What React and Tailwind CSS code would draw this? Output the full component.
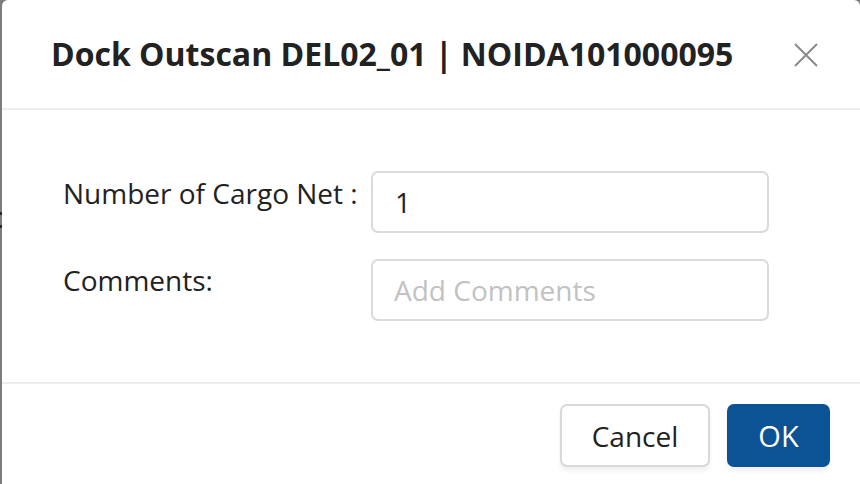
export default function App() {
  return (
    <div className="w-[860px] h-[484px] bg-[#7d7d7d] flex overflow-hidden" style={{ fontFamily: '"Open Sans", sans-serif' }}>
      <div className="w-[2px] shrink-0 flex flex-col">
        <div className="h-[212px]" />
        <div className="h-[3px] bg-[#2a2a2a]" />
        <div className="h-[10px]" />
        <div className="h-[3px] bg-[#2a2a2a]" />
      </div>
      <div className="flex-1 bg-white rounded-tl-[6px] rounded-tr-[6px] flex flex-col">
        <div className="h-[110px] flex items-center justify-between pl-[49px] pr-[42px] border-b-2 border-[#ececec]">
          <h1 className="text-[32px] font-bold text-[#222222] leading-none">Dock Outscan DEL02_01 | NOIDA101000095</h1>
          <svg width="24" height="24" viewBox="0 0 24 24" className="mt-[2px]">
            <path d="M1 1 L23 23 M23 1 L1 23" stroke="#8a8a8a" strokeWidth="2" fill="none" />
          </svg>
        </div>
        <div className="h-[272px] flex flex-col pt-[61px] pl-[61px] gap-[26px]">
          <div className="flex items-start">
            <label className="w-[308px] text-[28px] leading-[42px] text-[#222222] pt-[1px]">Number of Cargo Net :</label>
            <div className="w-[398px] h-[62px] border-2 border-[#dadada] rounded-[7px] flex items-center pl-[22px] text-[28px] text-[#222222]">1</div>
          </div>
          <div className="flex items-start">
            <label className="w-[308px] text-[28px] leading-[42px] text-[#222222]">Comments:</label>
            <div className="w-[398px] h-[62px] border-2 border-[#dadada] rounded-[7px] flex items-center pl-[21px] text-[28px] text-[#c2c2c2]">Add Comments</div>
          </div>
        </div>
        <div className="border-t-2 border-[#ececec] flex justify-end gap-[17px] pt-[20px] pr-[30px]">
          <button className="w-[150px] h-[63px] border-2 border-[#d9d9d9] rounded-[7px] bg-white text-[28px] text-[#222222] shadow-[0_4px_4px_rgba(0,0,0,0.06)]">Cancel</button>
          <button className="w-[103px] h-[63px] rounded-[7px] bg-[#0b5394] text-[29px] text-white shadow-[0_4px_4px_rgba(0,0,0,0.06)]">OK</button>
        </div>
      </div>
    </div>
  );
}
